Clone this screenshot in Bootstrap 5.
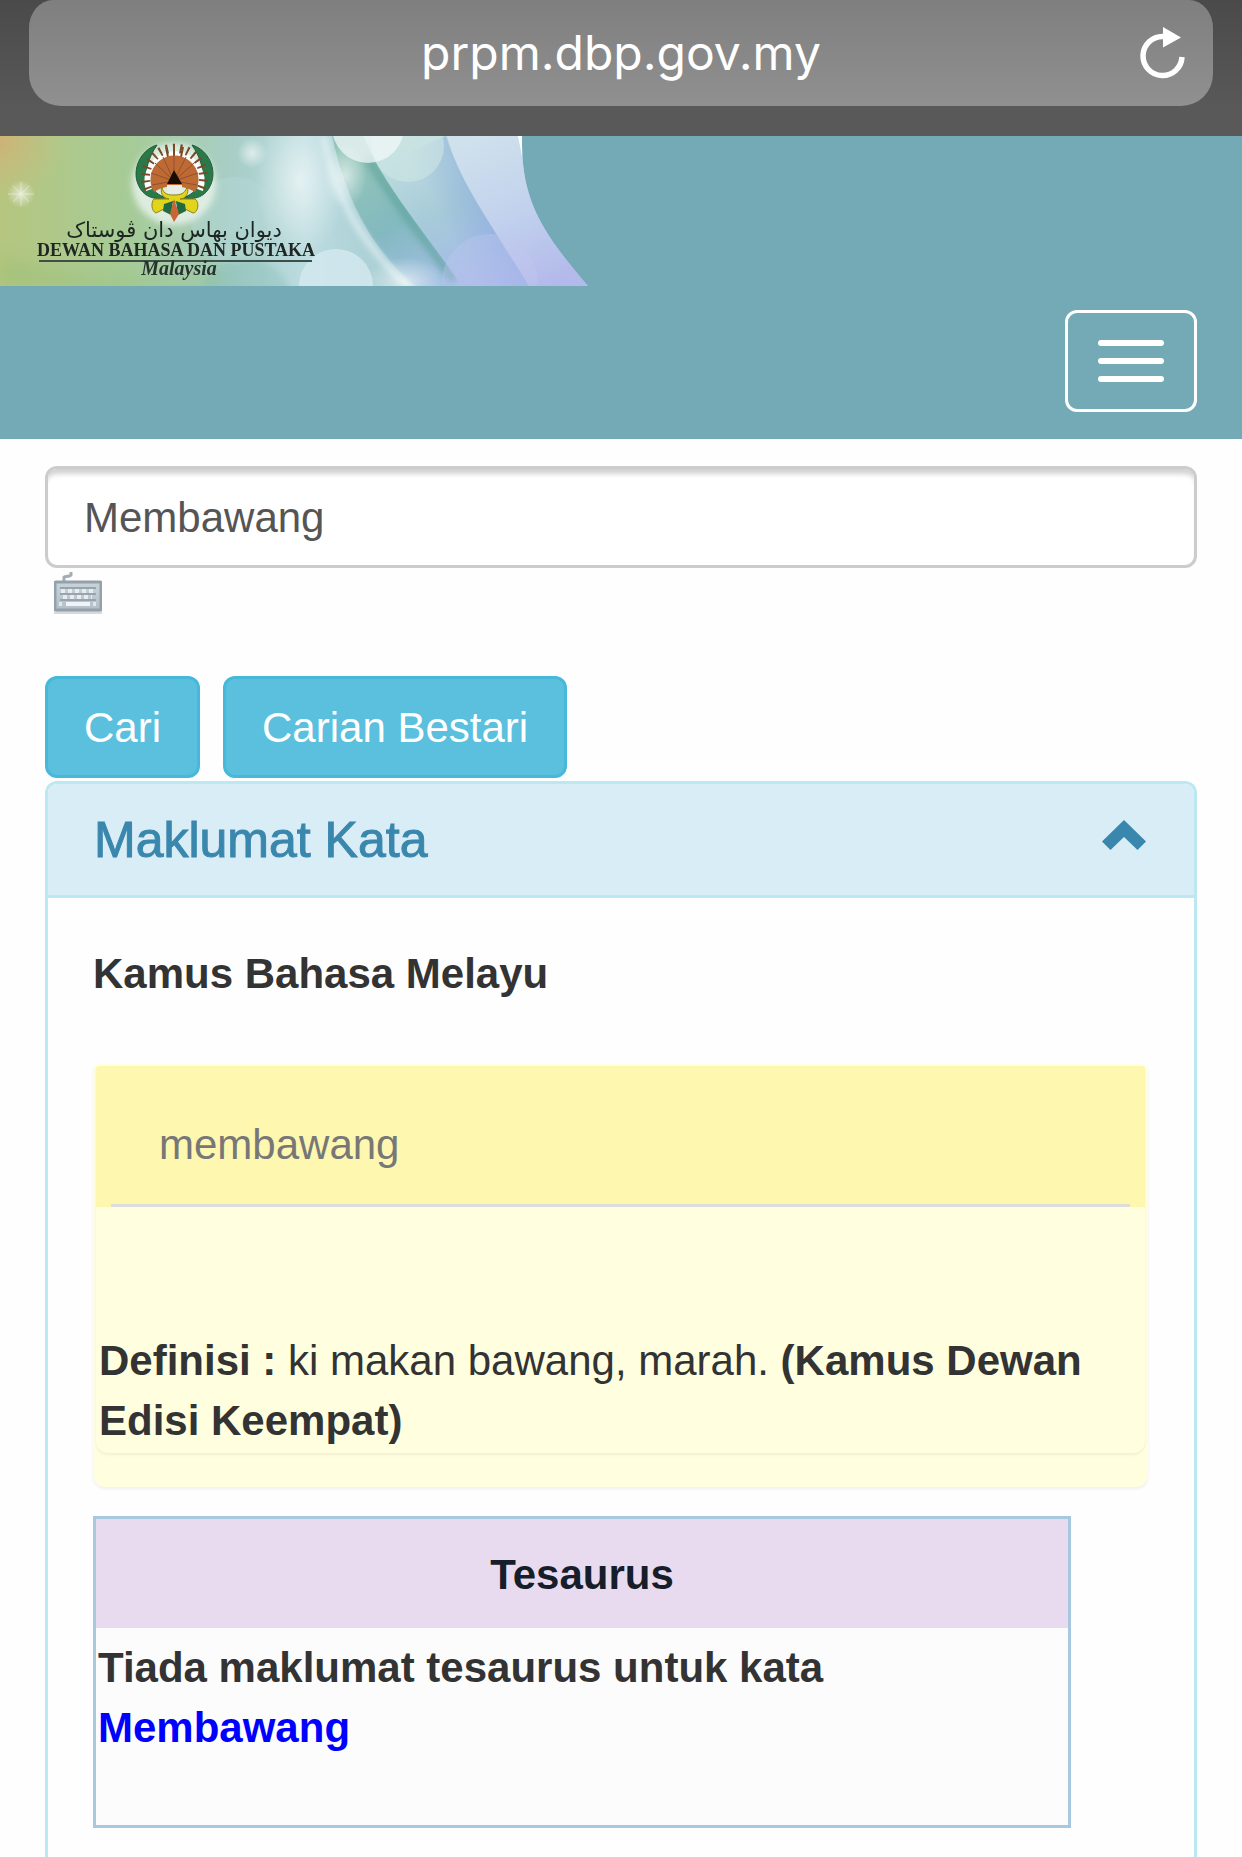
<!DOCTYPE html>
<html lang="ms">
<head>
<meta charset="utf-8">
<meta name="viewport" content="width=device-width, initial-scale=1">
<title>Pusat Rujukan Persuratan Melayu</title>
<link href="https://cdn.jsdelivr.net/npm/bootstrap@5.3.0/dist/css/bootstrap.min.css" rel="stylesheet">
<style>
body { font-family: "Liberation Sans", Arial, sans-serif; font-size: 42px; line-height: 60px; color: #333; background: #fefefe; }
.browser-bar { background: linear-gradient(#4a4a4a, #595959 80%); padding: 0 29px 30px; }
.address-pill { height: 106px; padding: 0 28px; border-radius: 24px 24px 32px 32px / 28px 28px 32px 32px; background: linear-gradient(#7f7f7f, #909090); color: #fff; font-family: Inter, sans-serif; font-size: 48px; }
.address-pill .btn, .pill-spacer { width: 45px; }
.site-header { background: #73aab6; padding-bottom: 27px; }
.site-banner svg { display: block; width: 588px; max-width: 100%; }
.menu-toggle { margin: 24px 45px 0 0; width: 132px; height: 102px; border: 3px solid #fff; border-radius: 12px; gap: 12px; padding: 0; background: none; }
.menu-toggle span { width: 66px; height: 6px; border-radius: 3px; background: #fff; }
.page-body { padding: 27px 45px 0; }
.search-box { height: 102px; border: 3px solid #ccc; border-radius: 12px; padding: 2px 36px 0; font-size: 42px; color: #555; background: #fff; box-shadow: inset 0 8px 5px -3px rgba(0,0,0,.18); }
.keyboard-row { height: 108px; padding: 3px 9px; }
.btn-search { height: 102px; padding: 0 36px; border: 3px solid #46b8da; border-radius: 12px; font-size: 42px; color: #fff; background: #5bc0de; }
.button-row { gap: 23px; margin-bottom: 3px; }
.word-panel { border: 3px solid #bce8f1; border-bottom: 0; border-radius: 12px 12px 0 0; background: #fefefe; }
.word-panel-head { height: 114px; padding: 0 48px 0 46px; border-bottom: 3px solid #bce8f1; border-radius: 9px 9px 0 0; background: #d9edf7; }
.word-panel-head h1 { font-size: 50px; font-weight: 400; line-height: 60px; color: #3a87ad; -webkit-text-stroke: 1px #3a87ad; }
.word-panel-head .btn { margin-bottom: 9px; }
.word-panel-body { padding: 46px 46px 29px 45px; }
.word-panel-body h2 { font-size: 42px; line-height: 60px; font-weight: 700; margin-bottom: 60px; }
.entry-outer { padding: 2px 3px 34px; border-radius: 6px 6px 12px 12px; background: #ffffdf; box-shadow: 0 2px 3px rgba(0,0,0,.06); margin-bottom: 29px; }
.entry-inner { border-radius: 3px 3px 12px 12px; box-shadow: 0 2px 3px rgba(0,0,0,.06); }
.entry-head { padding: 0 15px; background: #fdf7b0; color: #777; border-radius: 3px 3px 0 0; }
.entry-word { padding: 49px 48px 29px; border-bottom: 3px solid #ddd; }
.entry-text { padding: 124px 2px 2px 3px; }
.thesaurus { width: calc(100% - 77px); border: 3px solid #a8c8e0; background: #fcfcfc; }
.thesaurus th { background: #e8dbef; color: #161d2b; text-align: center; padding: 26px 0 23px; }
.thesaurus td { font-weight: 700; padding: 10px 2px 67px; }
.thesaurus a { color: #00f; text-decoration: none; }
.bare-btn { border: 0; padding: 0; line-height: 1; }
</style>
<script src="https://cdn.jsdelivr.net/npm/bootstrap@5.3.0/dist/js/bootstrap.bundle.min.js"></script>
</head>
<body class="min-vh-100 d-flex flex-column">

<div class="browser-bar">
  <div class="address-pill d-flex align-items-center justify-content-between">
    <span class="pill-spacer"></span>
    <span class="address-text">prpm.dbp.gov.my</span>
    <button class="btn bare-btn" type="button" aria-label="Muat semula">
      <svg width="45" height="52" viewBox="0 0 45 52" class="d-block"><path d="M23 9.500A19.500 19.500 0 1 0 42 30" fill="none" stroke="#fff" stroke-width="5.500"/><path d="M23 0L41 10.500 23 20.500z" fill="#fff"/></svg>
    </button>
  </div>
</div>

<header class="site-header">
  <a class="site-banner d-block" href="#" aria-label="Dewan Bahasa dan Pustaka">
    <svg viewBox="0 0 588 150">
      <defs>
        <linearGradient id="sky" x1="0" y1="0" x2="1" y2="0">
          <stop offset="0" stop-color="#b5c67f"/><stop offset=".22" stop-color="#a6cb97"/><stop offset=".4" stop-color="#a8cec8"/><stop offset=".52" stop-color="#bcdce0"/><stop offset=".68" stop-color="#a5cbd2"/><stop offset="1" stop-color="#b6bde9"/>
        </linearGradient>
        <radialGradient id="sun"><stop offset="0" stop-color="#cdb277"/><stop offset="1" stop-color="#c8c080" stop-opacity="0"/></radialGradient>
        <radialGradient id="glow"><stop offset="0" stop-color="#fff" stop-opacity=".6"/><stop offset="1" stop-color="#fff" stop-opacity="0"/></radialGradient>
        <linearGradient id="fold1" gradientUnits="userSpaceOnUse" x1="360" y1="20" x2="440" y2="150"><stop offset="0" stop-color="#93c5b8"/><stop offset=".5" stop-color="#83b9c0"/><stop offset="1" stop-color="#a3bfe4"/></linearGradient>
        <linearGradient id="fold2" gradientUnits="userSpaceOnUse" x1="410" y1="0" x2="490" y2="150"><stop offset="0" stop-color="#c0dfe0"/><stop offset=".5" stop-color="#a7cad9"/><stop offset=".75" stop-color="#a5c0e3"/><stop offset="1" stop-color="#a9b7ea"/></linearGradient>
        <linearGradient id="shade" gradientUnits="userSpaceOnUse" x1="425" y1="110" x2="505" y2="68"><stop offset=".3" stop-color="#7e9fdc" stop-opacity="0"/><stop offset="1" stop-color="#7e9fdc" stop-opacity=".55"/></linearGradient>
        <linearGradient id="fold4" gradientUnits="userSpaceOnUse" x1="480" y1="0" x2="550" y2="150"><stop offset="0" stop-color="#cfe1ec"/><stop offset=".5" stop-color="#c2d2ee"/><stop offset="1" stop-color="#b3b9ea"/></linearGradient>
        <clipPath id="edge"><path d="M0 0H522C521 62 539 93 588 150H0z"/></clipPath>
        <filter id="soft"><feGaussianBlur stdDeviation="3"/></filter>
        <filter id="wide" x="-50%" y="-50%" width="200%" height="200%"><feGaussianBlur stdDeviation="8"/></filter>
        <filter id="ink"><feGaussianBlur stdDeviation=".7"/></filter>
      </defs>
      <g clip-path="url(#edge)">
        <path fill="url(#sky)" d="M0 0h588v150H0z"/>
        <circle cx="0" cy="5" r="65" fill="url(#sun)"/>
        <path d="M0 150V120Q90 155 220 132V150z" fill="#8fbd74" opacity=".4" filter="url(#wide)"/>
        <circle cx="235" cy="85" r="44" fill="#b6dad6" opacity=".4"/>
        <circle cx="245" cy="170" r="48" fill="#78b8b0" opacity=".3" filter="url(#soft)"/>
        <ellipse cx="300" cy="45" rx="45" ry="75" fill="url(#glow)"/>
        <path d="M332 0C345 60 370 112 415 150H465C440 115 400 65 374 20L365 0z" fill="url(#fold1)"/>
        <path d="M368 22C395 65 425 105 455 145" fill="none" stroke="#529d93" stroke-width="9" opacity=".55" filter="url(#soft)"/>
        <ellipse cx="345" cy="40" rx="22" ry="32" fill="url(#glow)"/>
        <path d="M324 0C334 58 360 108 412 154" fill="none" stroke="#eef8f8" stroke-width="6" opacity=".65" filter="url(#soft)"/>
        <path d="M363 0L378 30C400 68 425 97 462 150H530L450 0z" fill="url(#fold2)"/>
        <path d="M446 0C460 45 485 80 529 150H462C425 97 400 68 378 30z" fill="url(#shade)"/>
        <path d="M447 0C460 47 490 85 529 150H588V0z" fill="url(#fold4)"/>
        <ellipse cx="405" cy="146" rx="40" ry="25" fill="url(#glow)"/>
        <circle cx="490" cy="146" r="48" fill="#c2c8f0" opacity=".35"/>
        <circle cx="408" cy="10" r="36" fill="#cfe6e4" opacity=".6"/>
        <circle cx="368" cy="-9" r="36" fill="#f0f7f8" opacity=".75"/>
        <circle cx="336" cy="150" r="37" fill="#d2e8ef" opacity=".85"/>
        <circle cx="252" cy="17" r="15" fill="url(#glow)"/>
        <circle cx="21" cy="58" r="14" fill="url(#glow)"/>
        <path d="M13 50L29 66M29 50L13 66M21 46V70M8 58H34" stroke="#fff" stroke-width="1" opacity=".4"/>
        <path d="M518 0H524L522 20z" fill="#fff"/>
      </g>
      <ellipse cx="174" cy="48" rx="42" ry="41" fill="#e4f0e6" opacity=".9" filter="url(#soft)"/>
      <g filter="url(#ink)">
        <path d="M157 9C140 14 132 34 138 48C143 61 154 64 166 62C152 57 144 44 147 31C149 22 153 15 157 9z" fill="#2b7a48" stroke="#1f5a3a" stroke-width="1"/>
        <path d="M192 9C209 14 217 34 211 48C206 61 195 64 183 62C197 57 205 44 202 31C200 22 196 15 192 9z" fill="#2b7a48" stroke="#1f5a3a" stroke-width="1"/>
        <path d="M149 54A27 27 0 1 1 200 54" fill="none" stroke="#fff" stroke-width="6"/>
        <path d="M148 53A29 29 0 1 1 201 53" fill="none" stroke="#7a4a2a" stroke-width="9" stroke-dasharray="2 5"/>
        <path d="M174 8V20M166 11L168 21M183 11L181 21" stroke="#7a4a2a" stroke-width="2"/>
        <path d="M154 56A24 24 0 1 1 195 56Q185 50 174 51Q163 50 154 56z" fill="#bd6a36"/>
        <path d="M174 45L151 37M174 45L155 27M174 45L163 21M174 45V19M174 45L186 21M174 45L194 27M174 45L198 37M174 45L152 49M174 45L197 49" stroke="#97502a" stroke-width="1"/>
        <path d="M174 34L167 48H182z" fill="#180f05"/>
        <path d="M167 49H182V57H167z" fill="#e9ede5"/>
        <path d="M162 51C163 59 170 59 174 59C180 59 185 58 187 51C190 57 185 63 180 63L195 63C200 66 198 77 193 77L183 72 174 65 166 72 156 77C151 75 151 66 154 63H169C162 62 160 56 162 51z" fill="#e1d51d" stroke="#8f8212" stroke-width="1"/>
        <path d="M164 68L173 65 171 79 163 75zM185 68L176 65 178 79 186 75z" fill="#216b43"/>
        <path d="M174 63L170 78 174 86 179 78z" fill="#c86534"/>
        <text x="174" y="101" text-anchor="middle" direction="rtl" font-family="DejaVu Sans, sans-serif" font-size="21" fill="#1c2523">ديوان بهاس دان ڤوستاک</text>
        <text x="176" y="120" text-anchor="middle" font-family="Liberation Serif, serif" font-size="18" font-weight="700" fill="#202824">DEWAN BAHASA DAN PUSTAKA</text>
        <path d="M39 125H312" stroke="#3c4f46" stroke-width="2"/>
        <text x="179" y="139" text-anchor="middle" font-family="Liberation Serif, serif" font-size="20" font-style="italic" font-weight="700" fill="#26332e">Malaysia</text>
      </g>
    </svg>
  </a>
  <div class="d-flex justify-content-end">
    <button class="menu-toggle d-flex flex-column align-items-center justify-content-center" type="button" aria-label="Menu"><span></span><span></span><span></span></button>
  </div>
</header>

<main class="page-body flex-grow-1 d-flex flex-column">
  <form>
    <input class="search-box form-control" type="text" value="Membawang" aria-label="Carian kata">
    <div class="keyboard-row">
      <button class="btn bare-btn d-block" type="button" aria-label="Papan kekunci">
        <svg width="48" height="44" viewBox="0 0 48 44" class="d-block">
          <defs><linearGradient id="keys" x1="0" y1="0" x2="0" y2="1"><stop offset="0" stop-color="#c9d4d9"/><stop offset="1" stop-color="#b3bfc8"/></linearGradient></defs>
          <path d="M10 11V6C10 5 16 6 17 4V1" fill="none" stroke="#a3adb4" stroke-width="3"/>
          <path d="M0 39H48V43H0z" fill="#d5dade"/>
          <rect x="1" y="11" width="46" height="28" rx="1" fill="url(#keys)" stroke="#94a1ab" stroke-width="3"/>
          <path d="M6 17H42M6 23H42M6 29H42" stroke="#97a4ad" stroke-width="2"/>
          <path d="M7 20H42M9 26H38" stroke="#e6ecef" stroke-width="4" stroke-dasharray="4 3"/>
          <path d="M12 33H36" stroke="#f0f4f6" stroke-width="4"/><path d="M5 33H8M39 33H42" stroke="#e0e7ea" stroke-width="4"/>
        </svg>
      </button>
    </div>
    <div class="button-row d-flex">
      <button class="btn btn-search" type="submit">Cari</button>
      <button class="btn btn-search" type="button">Carian Bestari</button>
    </div>
  </form>

  <section class="word-panel flex-grow-1">
    <div class="word-panel-head d-flex align-items-center justify-content-between">
      <h1 class="m-0">Maklumat Kata</h1>
      <button class="btn bare-btn" type="button" aria-label="Tutup panel">
        <svg width="44" height="30" viewBox="0 0 44 30" class="d-block"><path d="M22 0L44 21.500 35.500 30 22 17 8.500 30 0 21.500z" fill="#3a87ad"/></svg>
      </button>
    </div>
    <div class="word-panel-body">
      <h2 class="mt-0">Kamus Bahasa Melayu</h2>
      <article class="entry-outer">
        <div class="entry-inner">
          <div class="entry-head"><div class="entry-word">membawang</div></div>
          <div class="entry-text"><b>Definisi :</b> ki makan bawang, marah. <b>(Kamus Dewan</b> <b>Edisi Keempat)</b></div>
        </div>
      </article>
      <table class="thesaurus">
        <thead><tr><th scope="col">Tesaurus</th></tr></thead>
        <tbody><tr><td>Tiada maklumat tesaurus untuk kata <a href="#">Membawang</a></td></tr></tbody>
      </table>
    </div>
  </section>
</main>
</body>
</html>
